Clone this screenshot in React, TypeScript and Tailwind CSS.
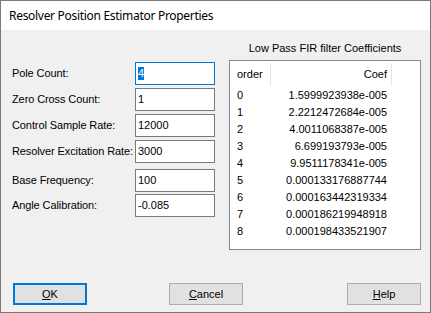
import React from 'react'

// 폼 필드 정의
const FIELDS = [
  { label: 'Pole Count:', value: '4', focused: true, gap: 'mb-[3px]' },
  { label: 'Zero Cross Count:', value: '1', gap: 'mb-[3px]' },
  { label: 'Control Sample Rate:', value: '12000', gap: 'mb-[3px]' },
  { label: 'Resolver Excitation Rate:', value: '3000', gap: 'mb-[6px]' },
  { label: 'Base Frequency:', value: '100', gap: 'mb-[2px]' },
  { label: 'Angle Calibration:', value: '-0.085', gap: '' },
]

const COEFS = [
  '1.5999923938e-005',
  '2.2212472684e-005',
  '4.0011068387e-005',
  '6.699193793e-005',
  '9.9511178341e-005',
  '0.000133176887744',
  '0.000163442319334',
  '0.000186219948918',
  '0.000198433521907',
]

function Field({ label, value, focused, gap }: { label: string; value: string; focused?: boolean; gap: string }) {
  return (
    <div className={`flex items-center h-[23px] ${gap}`}>
      <div className="w-[123px] shrink-0 whitespace-nowrap text-[11px] leading-[13px] tracking-[-0.1px] text-black">{label}</div>
      <div
        className={`w-[80px] shrink-0 h-[23px] bg-white flex items-center pl-[2px] border ${
          focused ? 'border-[#0078d7]' : 'border-[#7a7a7a]'
        }`}
      >
        <span className={`text-[11px] leading-[13px] ${focused ? 'bg-[#0078d7] text-white' : 'text-black'}`}>{value}</span>
      </div>
    </div>
  )
}

function Btn({ children, primary, cls }: { children: React.ReactNode; primary?: boolean; cls: string }) {
  return (
    <button
      className={`w-[74px] h-[22px] bg-[#e1e1e1] text-[11px] leading-[13px] text-black flex items-center justify-center ${cls} ${
        primary ? 'border-2 border-[#0078d7]' : 'border border-[#adadad]'
      }`}
    >
      {children}
    </button>
  )
}

export default function App() {
  return (
    <div
      className="w-[431px] h-[313px] bg-[#f0f0f0] border border-[#7a7a7a] flex flex-col overflow-hidden"
      style={{ fontFamily: '"Liberation Sans", Arial, sans-serif' }}
    >
      {/* 타이틀 바 */}
      <div className="h-[29px] bg-white flex items-center pl-[8px]">
        <span className="text-[12px] tracking-[-0.3px] text-black" style={{ fontFamily: '"Noto Sans", "Open Sans", sans-serif' }}>
          Resolver Position Estimator Properties
        </span>
      </div>

      <div className="flex-1 flex flex-col">
        <div className="flex pl-[11px]">
          {/* 좌측 입력 */}
          <div className="pt-[32px] flex flex-col">
            {FIELDS.map((f) => (
              <Field key={f.label} {...f} />
            ))}
          </div>

          {/* 우측 계수 목록 */}
          <div className="ml-[14px] w-[192px] pt-[10px] flex flex-col">
            <div className="h-[17px] leading-[17px] text-[11px] text-center text-black">Low Pass FIR filter Coefficients</div>
            <div className="mt-[3px] h-[190px] bg-white border border-[#828790] text-[11px] text-black">
              <div className="flex h-[26px] items-center">
                <div className="w-[41px] h-[23px] border-r border-[#e5e5e5] pl-[7px] flex items-center">order</div>
                <div className="w-[121px] h-[23px] border-r border-[#e5e5e5] pr-[4px] flex items-center justify-end">Coef</div>
              </div>
              {COEFS.map((c, i) => (
                <div key={i} className="flex h-[17px] items-center leading-[13px]">
                  <div className="w-[41px] pl-[7px]">{i}</div>
                  <div className="w-[121px] pr-[5px] text-right">{c}</div>
                </div>
              ))}
            </div>
          </div>
        </div>

        {/* 하단 버튼 */}
        <div className="mt-auto mb-[7px] flex">
          <Btn primary cls="ml-[12px]">
            <span><span className="underline">O</span>K</span>
          </Btn>
          <Btn cls="ml-[82px]">
            <span><span className="underline">C</span>ancel</span>
          </Btn>
          <Btn cls="ml-[104px]">
            <span><span className="underline">H</span>elp</span>
          </Btn>
        </div>
      </div>
    </div>
  )
}
